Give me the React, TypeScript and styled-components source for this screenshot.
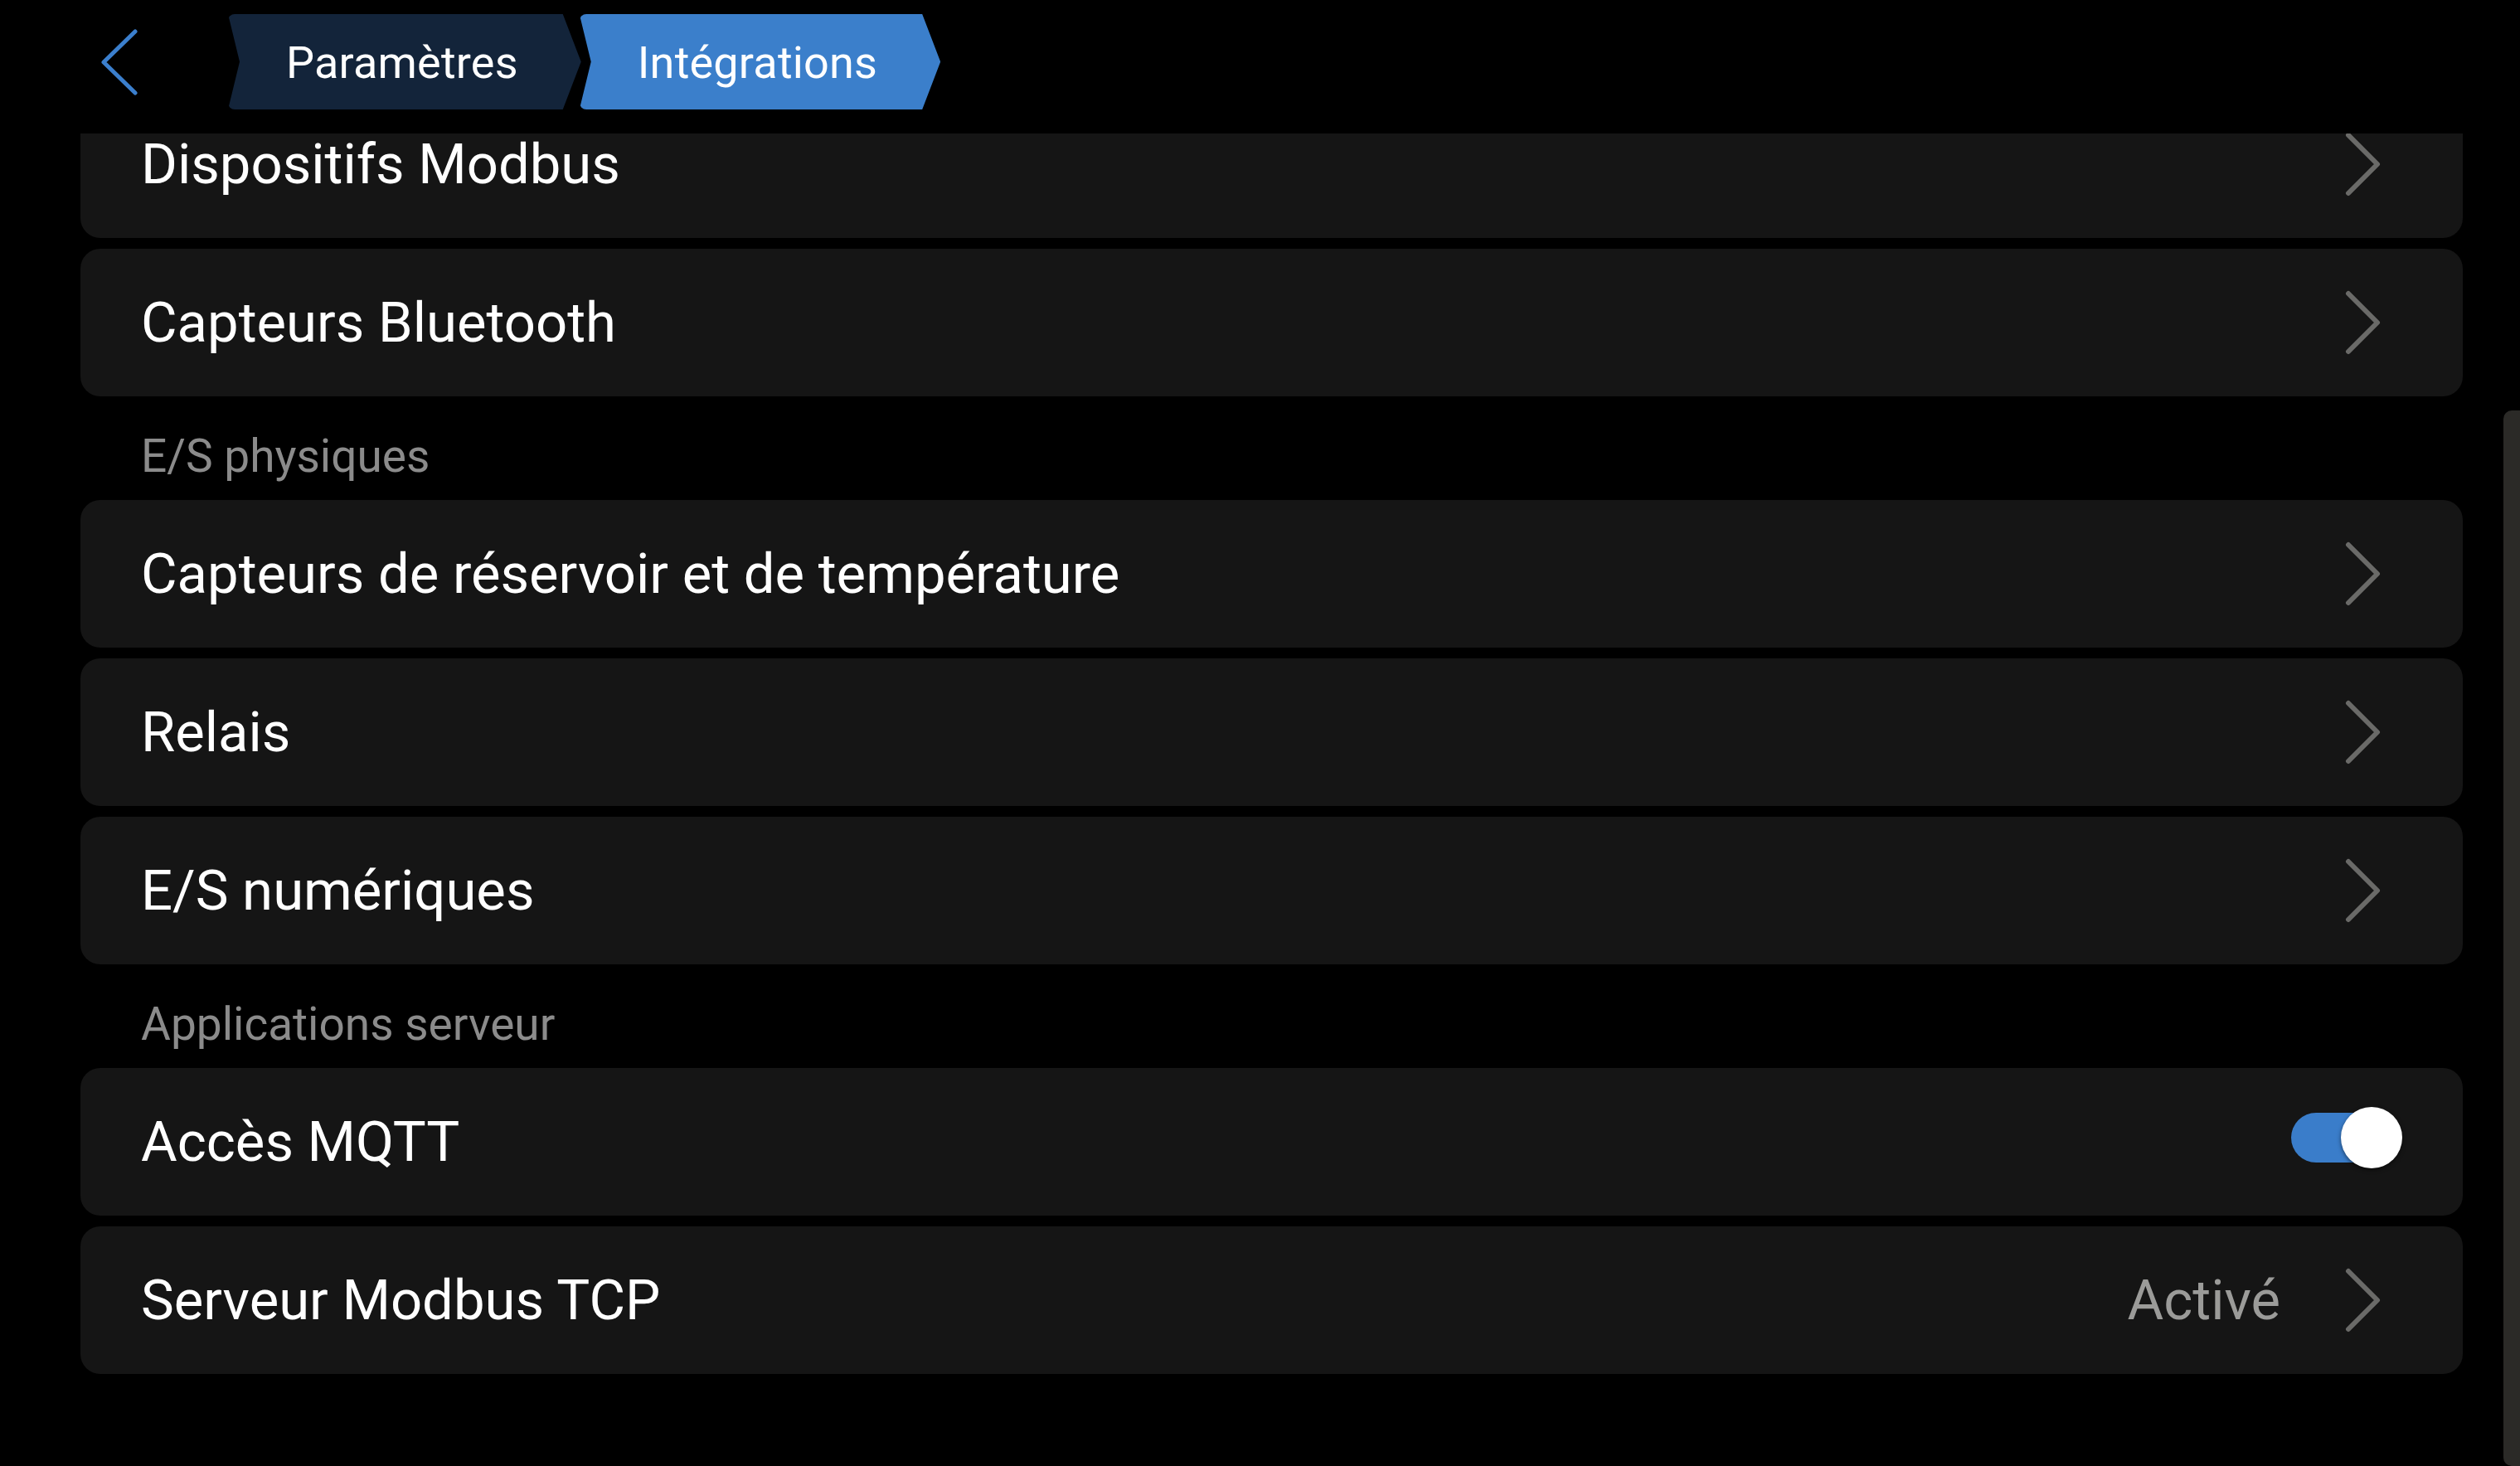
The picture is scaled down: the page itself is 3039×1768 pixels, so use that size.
import styled, { createGlobalStyle } from 'styled-components'

const GlobalStyle = createGlobalStyle`
  html, body {
    margin: 0;
    padding: 0;
    background: #000000;
    overflow: hidden;
  }
  * {
    box-sizing: border-box;
  }
`

type Item = {
  kind: 'item'
  title: string
  value?: string
  toggle?: boolean
}

type Section = {
  kind: 'section'
  title: string
}

const entries: (Item | Section)[] = [
  { kind: 'item', title: 'Dispositifs Modbus' },
  { kind: 'item', title: 'Capteurs Bluetooth' },
  { kind: 'section', title: 'E/S physiques' },
  { kind: 'item', title: 'Capteurs de réservoir et de température' },
  { kind: 'item', title: 'Relais' },
  { kind: 'item', title: 'E/S numériques' },
  { kind: 'section', title: 'Applications serveur' },
  { kind: 'item', title: 'Accès MQTT', toggle: true },
  { kind: 'item', title: 'Serveur Modbus TCP', value: 'Activé' },
]

const ChevronRight = () => (
  <Chevron width="44" height="78" viewBox="0 0 44 78">
    <path d="M4 4 L39 39 L4 74" fill="none" stroke="#6a6a68" strokeWidth="6" strokeLinecap="round" strokeLinejoin="round" />
  </Chevron>
)

const BackArrow = () => (
  <svg width="48" height="80" viewBox="0 0 48 80">
    <path d="M44 3 L6 40 L44 77" fill="none" stroke="#3b7fcd" strokeWidth="5" strokeLinecap="round" strokeLinejoin="round" />
  </svg>
)

const App = () => {
  return (
    <>
      <GlobalStyle />
      <Screen>
        <Header>
          <BackButton>
            <BackArrow />
          </BackButton>
          <Crumbs>
            <Crumb>Paramètres</Crumb>
            <Crumb active>Intégrations</Crumb>
          </Crumbs>
        </Header>
        <Viewport>
          <List>
            {entries.map((e, i) =>
              e.kind === 'section' ? (
                <SectionLabel key={i}>{e.title}</SectionLabel>
              ) : (
                <Row key={i}>
                  <RowTitle>{e.title}</RowTitle>
                  <Trailing>
                    {e.value && <RowValue>{e.value}</RowValue>}
                    {e.toggle ? (
                      <Switch>
                        <Track />
                        <Knob />
                      </Switch>
                    ) : (
                      <ChevronRight />
                    )}
                  </Trailing>
                </Row>
              )
            )}
          </List>
          <ScrollThumb />
        </Viewport>
      </Screen>
    </>
  )
}

const Screen = styled.div`
  width: 3039px;
  height: 1768px;
  background: #000000;
  display: flex;
  flex-direction: column;
  font-family: Roboto, 'Noto Sans', 'Liberation Sans', sans-serif;
  color: #ffffff;
`

const Header = styled.header`
  height: 161px;
  flex-shrink: 0;
  display: flex;
  align-items: flex-start;
  padding: 17px 0 0 119px;
  position: relative;
  z-index: 2;
  background: #000000;
`

const BackButton = styled.div`
  height: 115px;
  width: 48px;
  display: flex;
  align-items: center;
  margin-right: 108px;
`

const Crumbs = styled.nav`
  display: flex;
  align-items: center;
`

const Crumb = styled.div<{ active?: boolean }>`
  height: 115px;
  display: flex;
  align-items: center;
  padding: 2px 76px 0 70px;
  font-size: 54px;
  letter-spacing: 0.2px;
  color: #ffffff;
  background: ${(p) => (p.active ? '#3b7fcb' : '#13243a')};
  margin-left: ${(p) => (p.active ? '-2px' : '0')};
  clip-path: polygon(0 0, calc(100% - 22px) 0, 100% 50%, calc(100% - 22px) 100%, 0 100%, 14px 50%);
  border-radius: 8px;
`

const Viewport = styled.main`
  flex: 1;
  overflow: hidden;
  position: relative;
`

const List = styled.div`
  margin-top: -52px;
  padding: 0 69px 0 97px;
  display: flex;
  flex-direction: column;
  gap: 13px;
`

const Row = styled.div`
  height: 178px;
  border-radius: 24px;
  background: #151515;
  display: flex;
  align-items: center;
  justify-content: space-between;
  padding: 0 73px 0 73px;
`

const RowTitle = styled.span`
  font-size: 67px;
  color: #ffffff;
`

const Trailing = styled.div`
  display: flex;
  align-items: center;
`

const RowValue = styled.span`
  font-size: 67px;
  color: #9b9b99;
  margin-right: 78px;
`

const Chevron = styled.svg`
  margin-right: 25px;
  display: block;
`

const SectionLabel = styled.div`
  height: 99px;
  padding: 27px 0 0 73px;
  font-size: 55px;
  line-height: 64px;
  color: #8b8b8b;
`

const Switch = styled.div`
  position: relative;
  width: 134px;
  height: 74px;
  margin-bottom: 10px;
`

const Track = styled.div`
  position: absolute;
  left: 0;
  right: 12px;
  top: 7px;
  bottom: 7px;
  border-radius: 30px;
  background: #3a7dca;
`

const Knob = styled.div`
  position: absolute;
  right: 0;
  top: 0;
  width: 74px;
  height: 74px;
  border-radius: 50%;
  background: #ffffff;
  box-shadow: 0 2px 5px rgba(0, 0, 0, 0.5);
`

const ScrollThumb = styled.div`
  position: absolute;
  right: 0;
  top: 334px;
  bottom: 0;
  width: 20px;
  border-radius: 10px 0 0 10px;
  background: #2b2a27;
`

export default App
